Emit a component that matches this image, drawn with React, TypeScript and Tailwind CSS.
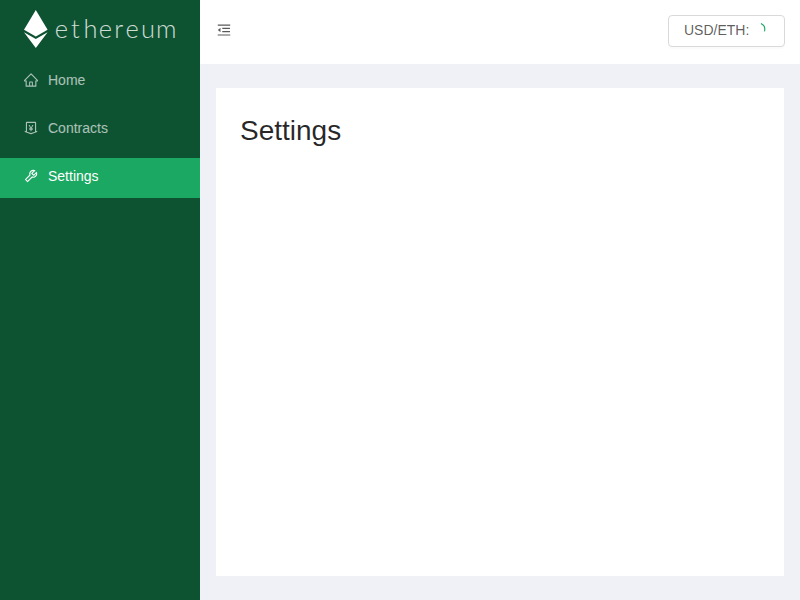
import React from "react";
import {
  AiOutlineHome,
  AiOutlineMenuFold,
  AiOutlineMoneyCollect,
  AiOutlineTool,
} from "react-icons/ai";

const ICON_BOX = "64 64 896 896";

const items = [
  { label: "Home", Icon: AiOutlineHome, active: false },
  { label: "Contracts", Icon: AiOutlineMoneyCollect, active: false },
  { label: "Settings", Icon: AiOutlineTool, active: true },
];

function Logo() {
  return (
    <div className="h-[54px] pl-6 pt-[10px]">
      <svg width="160" height="42" viewBox="0 0 160 42" fill="#fff">
        <path d="M11.8 0 23.6 19.8 11.8 26.6 0 19.8Z" />
        <path d="M0 22.2 11.8 29 23.6 22.2 11.8 38Z" />
        <text
          transform="translate(31 28) scale(1.06 1.02)"
          x="-0.3 15.2 27 41.2 56 66.6 81.2 95.4"
          y="0"
          className="font-['Lato'] text-[24px] font-light opacity-80"
        >
          ethereum
        </text>
      </svg>
    </div>
  );
}

export default function App() {
  return (
    <div className="flex h-[600px] w-[800px] overflow-hidden bg-[#f0f1f6] font-['Liberation_Sans',sans-serif] text-sm">
      <aside className="w-[200px] shrink-0 bg-[#0d5231]">
        <Logo />
        <nav className="flex flex-col gap-2 pt-2">
          {items.map(({ label, Icon, active }) => (
            <a
              key={label}
              className={
                active
                  ? "flex h-10 items-center gap-[10px] bg-[#1ba862] pb-1 pl-6 text-white"
                  : "flex h-10 items-center gap-[10px] pb-1 pl-6 text-white/65"
              }
            >
              <Icon size={14} viewBox={ICON_BOX} />
              <span>{label}</span>
            </a>
          ))}
        </nav>
      </aside>
      <div className="flex flex-1 flex-col">
        <header className="flex h-16 items-start justify-between bg-white pl-[17px] pr-[15px] pt-[15px] text-black/65">
          <AiOutlineMenuFold size={14} viewBox={ICON_BOX} className="mt-2" />
          <button className="flex h-8 w-[117px] items-center rounded border border-[#d9d9d9] bg-white pb-[2px] pl-[15px] shadow-[0_2px_0_rgba(0,0,0,0.016)]">
            <span>USD/ETH:</span>
            <svg className="mb-1 ml-[5px]" width="14" height="14" viewBox="0 0 14 14" fill="none">
              <path d="M6.9 2.5Q11.9 4.6 10.5 10.4" stroke="#1ba862" strokeWidth="1.1" />
            </svg>
          </button>
        </header>
        <main className="mx-4 my-6 flex-1 bg-white p-6">
          <h1 className="text-[28px] leading-[38px] text-black/85">Settings</h1>
        </main>
      </div>
    </div>
  );
}
